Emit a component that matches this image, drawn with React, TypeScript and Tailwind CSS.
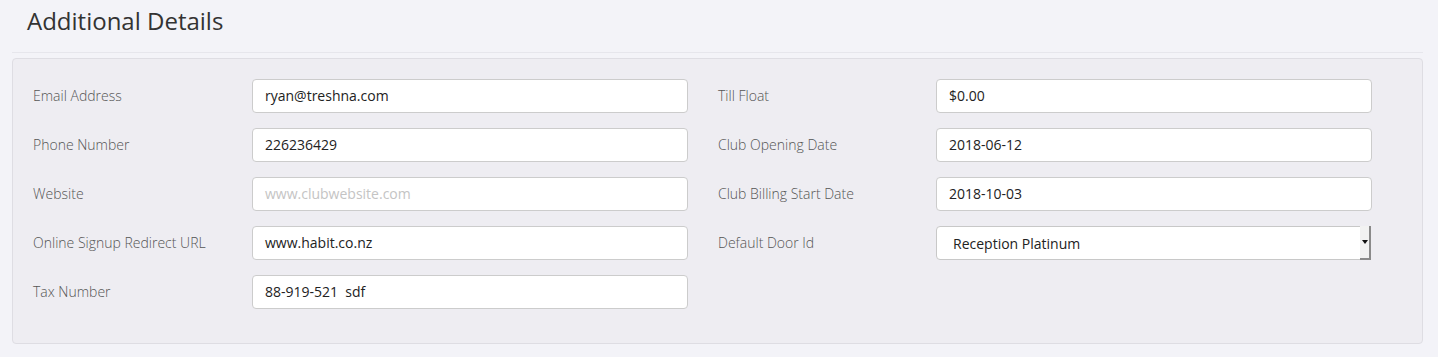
import React from "react";

type Field = {
  label: string;
  value?: string;
  placeholder?: string;
  select?: boolean;
};

const leftFields: Field[] = [
  { label: "Email Address", value: "ryan@treshna.com" },
  { label: "Phone Number", value: "226236429" },
  { label: "Website", placeholder: "www.clubwebsite.com" },
  { label: "Online Signup Redirect URL", value: "www.habit.co.nz" },
  { label: "Tax Number", value: "88-919-521  sdf" },
];

const rightFields: Field[] = [
  { label: "Till Float", value: "$0.00" },
  { label: "Club Opening Date", value: "2018-06-12" },
  { label: "Club Billing Start Date", value: "2018-10-03" },
  { label: "Default Door Id", value: "Reception Platinum", select: true },
];

function FieldRow({ field, labelWidth }: { field: Field; labelWidth: string }) {
  return (
    <div className="flex items-center h-[34px]">
      <label className={labelWidth + " shrink-0 pb-[2px] text-[14px] font-light text-[#555]"}>
        {field.label}
      </label>
      {field.select ? (
        <div className="relative flex items-center w-[435px] h-[34px] bg-white border border-[#c8c8c8] rounded-l-[4px]">
          <span className="pl-4 text-[14px] text-[#222]">{field.value}</span>
          {/* old-style select button */}
          <div className="absolute right-[-1px] top-[-1px] bottom-[-1px] w-[11px] bg-[#f2f2f2] border-r-2 border-b-2 border-[#8a8a8a] flex items-center justify-center">
            <svg width="6" height="4" viewBox="0 0 6 4">
              <path d="M0 0h6L3 4z" fill="#111" />
            </svg>
          </div>
        </div>
      ) : (
        <div className="flex items-center w-[436px] h-[34px] bg-white border border-[#cccccc] rounded-[4px] px-3 pb-[2px] text-[14px]">
          {field.value ? (
            <span className="text-[#222] whitespace-pre">{field.value}</span>
          ) : (
            <span className="text-[#c4c4c4]">{field.placeholder}</span>
          )}
        </div>
      )}
    </div>
  );
}

export default function App() {
  return (
    <div
      className="w-[1438px] h-[357px] bg-[#f3f3f8] text-[#333] overflow-hidden"
      style={{ fontFamily: '"Open Sans", "Liberation Sans", sans-serif' }}
    >
      {/* Header */}
      <div className="mx-[12px] w-[1411px] h-[53px] border-b border-[#e6e6ec]">
        <h2 className="pl-[15px] pt-[3px] text-[24px] leading-[36px] text-[#333]">
          Additional Details
        </h2>
      </div>

      {/* Panel */}
      <div className="mt-[5px] ml-[12px] w-[1411px] h-[286px] bg-[#eeedf2] border border-[#dedde3] rounded-[4px] pl-[20px] pt-[20px]">
        <div className="flex">
          <div className="w-[685px] flex flex-col gap-[15px]">
            {leftFields.map((f) => (
              <FieldRow key={f.label} field={f} labelWidth="w-[219px]" />
            ))}
          </div>
          <div className="w-[685px] flex flex-col gap-[15px]">
            {rightFields.map((f) => (
              <FieldRow key={f.label} field={f} labelWidth="w-[218px]" />
            ))}
          </div>
        </div>
      </div>
    </div>
  );
}
